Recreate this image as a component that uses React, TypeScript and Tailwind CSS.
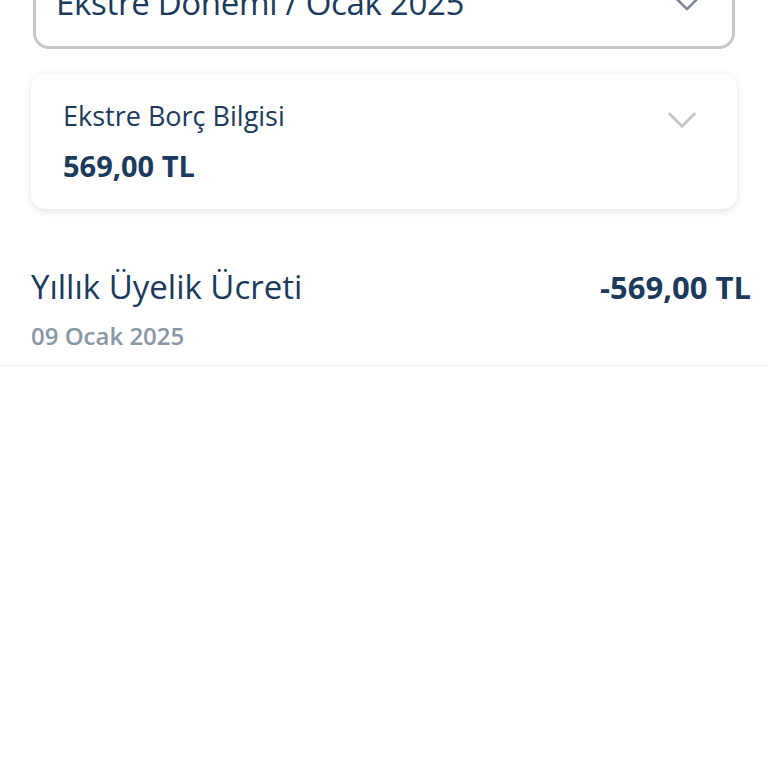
import React from "react";

const Chevron = ({ className, stroke, sw = 3 }: { className: string; stroke: string; sw?: number }) => (
  <svg viewBox="0 0 30 18" className={className} fill="none">
    <path d="M2 2 L15 15 L28 2" stroke={stroke} strokeWidth={sw} strokeLinecap="round" strokeLinejoin="round" />
  </svg>
);

export default function App() {
  return (
    <div
      className="w-[768px] h-[768px] bg-white overflow-hidden text-[#1b3a5c]"
      style={{ fontFamily: '"Open Sans", "Noto Sans", sans-serif' }}
    >
      <div className="mx-[33px] mt-[-52px] h-[101px] rounded-[16px] border-[3px] border-[#c6c8ce] flex items-start justify-between pl-[20px] pr-[32px] pt-[32px]">
        <span className="text-[33px] font-medium leading-[40px] tracking-[-0.3px]">
          Ekstre Dönemi / Ocak 2025
        </span>
        <Chevron className="w-[26px] h-[16px] mt-[13px]" stroke="#7d8494" />
      </div>

      <div className="mx-[31px] mt-[25px] h-[135px] rounded-[14px] bg-white shadow-[0_2px_8px_rgba(0,0,0,0.12)] flex justify-between pl-[32px] pr-[40px]">
        <div className="flex flex-col pt-[27px]">
          <span className="text-[27px] font-medium leading-[30px]">
            Ekstre Borç Bilgisi
          </span>
          <span className="text-[29px] font-bold leading-[34px] mt-[18px]">
            569,00 TL
          </span>
        </div>
        <Chevron className="w-[30px] h-[17px] mt-[38px]" stroke="#c3c4cc" />
      </div>

      <div className="mt-[56px] pl-[31px] pr-[17px] pb-[13px] border-b border-[#ececec]">
        <div className="flex items-center justify-between">
          <span className="text-[33px] font-medium leading-[44px]">
            Yıllık Üyelik Ücreti
          </span>
          <span className="text-[31px] font-bold leading-[44px]">
            -569,00 TL
          </span>
        </div>
        <div className="mt-[11px] text-[24px] font-semibold leading-[32px] text-[#8a97a6]">
          09 Ocak 2025
        </div>
      </div>
    </div>
  );
}
